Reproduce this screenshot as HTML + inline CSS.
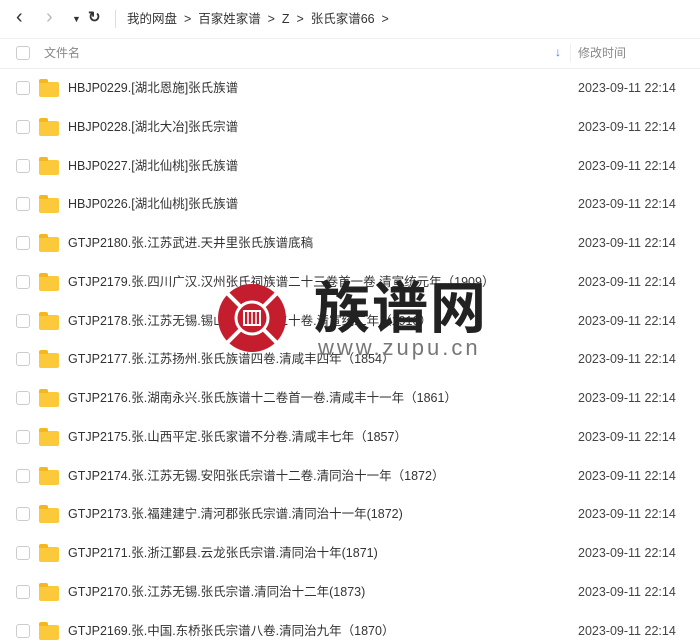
<!DOCTYPE html><html><head><style>
body{margin:0;width:700px;height:643px;overflow:hidden;background:#fff;font-family:"Liberation Sans","Noto Sans CJK SC",sans-serif;position:relative;color:#333}
.nav{position:absolute;top:0;left:0;width:700px;height:38px;border-bottom:1px solid #eee}
.t{position:absolute;font-size:13px;white-space:nowrap;line-height:18px}
.hd{position:absolute;top:38px;left:0;width:700px;height:30px;border-bottom:1px solid #eee}
.cb{position:absolute;left:16px;width:12px;height:12px;border:1px solid #ccc;border-radius:3px;background:#fff}
.fd{position:absolute;left:39px;width:20px;height:15px;background:#fcc93a;border-radius:2px}
.fd:before{content:"";position:absolute;left:0;top:-3px;width:9px;height:4px;background:#f5b720;border-radius:2px 2px 0 0}
</style></head><body>
<div class="nav">
<div class="t" style="left:16px;top:8px;font-size:20px;color:#333">&#8249;</div>
<div class="t" style="left:46px;top:8px;font-size:20px;color:#bbb">&#8250;</div>
<div class="t" style="left:72px;top:10px;font-size:9px">&#9660;</div>
<div class="t" style="left:88px;top:9px;font-size:15px;font-weight:bold">&#8635;</div>
<div style="position:absolute;left:115px;top:10px;width:1px;height:18px;background:#ddd"></div>
<div class="t" style="left:127px;top:10px;font-size:12.5px">我的网盘 &nbsp;&gt;&nbsp; 百家姓家谱 &nbsp;&gt;&nbsp; Z &nbsp;&gt;&nbsp; 张氏家谱66 &nbsp;&gt;</div>
</div>
<div class="hd">
<div class="cb" style="top:8px"></div>
<div class="t" style="left:44px;top:6px;color:#888;font-size:12px">文件名</div>
<div class="t" style="left:555px;top:5px;color:#2a7fe0;font-size:12px">&#8595;</div>
<div style="position:absolute;left:570px;top:6px;width:1px;height:18px;background:#eee"></div>
<div class="t" style="left:578px;top:6px;color:#888;font-size:12px">修改时间</div>
</div>
<div id="rows"></div>
<script>
var n=["HBJP0229.[湖北恩施]张氏族谱","HBJP0228.[湖北大冶]张氏宗谱","HBJP0227.[湖北仙桃]张氏族谱","HBJP0226.[湖北仙桃]张氏族谱","GTJP2180.张.江苏武进.天井里张氏族谱底稿","GTJP2179.张.四川广汉.汉州张氏祠族谱二十三卷首一卷.清宣统元年（1909）","GTJP2178.张.江苏无锡.锡山张氏宗谱二十卷.清宣统二年（1910）","GTJP2177.张.江苏扬州.张氏族谱四卷.清咸丰四年（1854）","GTJP2176.张.湖南永兴.张氏族谱十二卷首一卷.清咸丰十一年（1861）","GTJP2175.张.山西平定.张氏家谱不分卷.清咸丰七年（1857）","GTJP2174.张.江苏无锡.安阳张氏宗谱十二卷.清同治十一年（1872）","GTJP2173.张.福建建宁.清河郡张氏宗谱.清同治十一年(1872)","GTJP2171.张.浙江鄞县.云龙张氏宗谱.清同治十年(1871)","GTJP2170.张.江苏无锡.张氏宗谱.清同治十二年(1873)","GTJP2169.张.中国.东桥张氏宗谱八卷.清同治九年（1870）"];
var h="";n.forEach(function(s,i){var c=88+i*38.75;h+='<div class="cb" style="top:'+(c-7)+'px"></div><div class="fd" style="top:'+(c-6)+'px"></div><div class="t" style="left:68px;top:'+(c-9)+'px;font-size:12.5px">'+s+'</div><div class="t" style="left:578px;top:'+(c-9)+'px;font-size:12.5px;color:#444">2023-09-11 22:14</div>';});
document.getElementById("rows").innerHTML=h;
</script>
<svg style="position:absolute;left:217px;top:283px" width="72" height="72" viewBox="0 0 72 72">
<circle cx="35" cy="35" r="34" fill="#c41e2e"/>
<circle cx="35" cy="35" r="16" fill="none" stroke="#fff" stroke-width="3"/>
<path d="M8 8L23 23M62 8L47 23M8 62L23 47M62 62L47 47" stroke="#fff" stroke-width="4"/>
<path d="M27 28h16v14H27z" fill="#c41e2e" stroke="#fff" stroke-width="2"/>
<path d="M31 28v14M35 28v14M39 28v14" stroke="#fff" stroke-width="1.5"/>
</svg>
<div class="t" style="left:314px;top:281px;font-size:56px;line-height:56px;font-weight:bold;color:#222;letter-spacing:2px">族谱网</div>
<div class="t" style="left:318px;top:337px;font-size:22px;line-height:22px;color:#777;letter-spacing:3px">www.zupu.cn</div>
</body></html>
